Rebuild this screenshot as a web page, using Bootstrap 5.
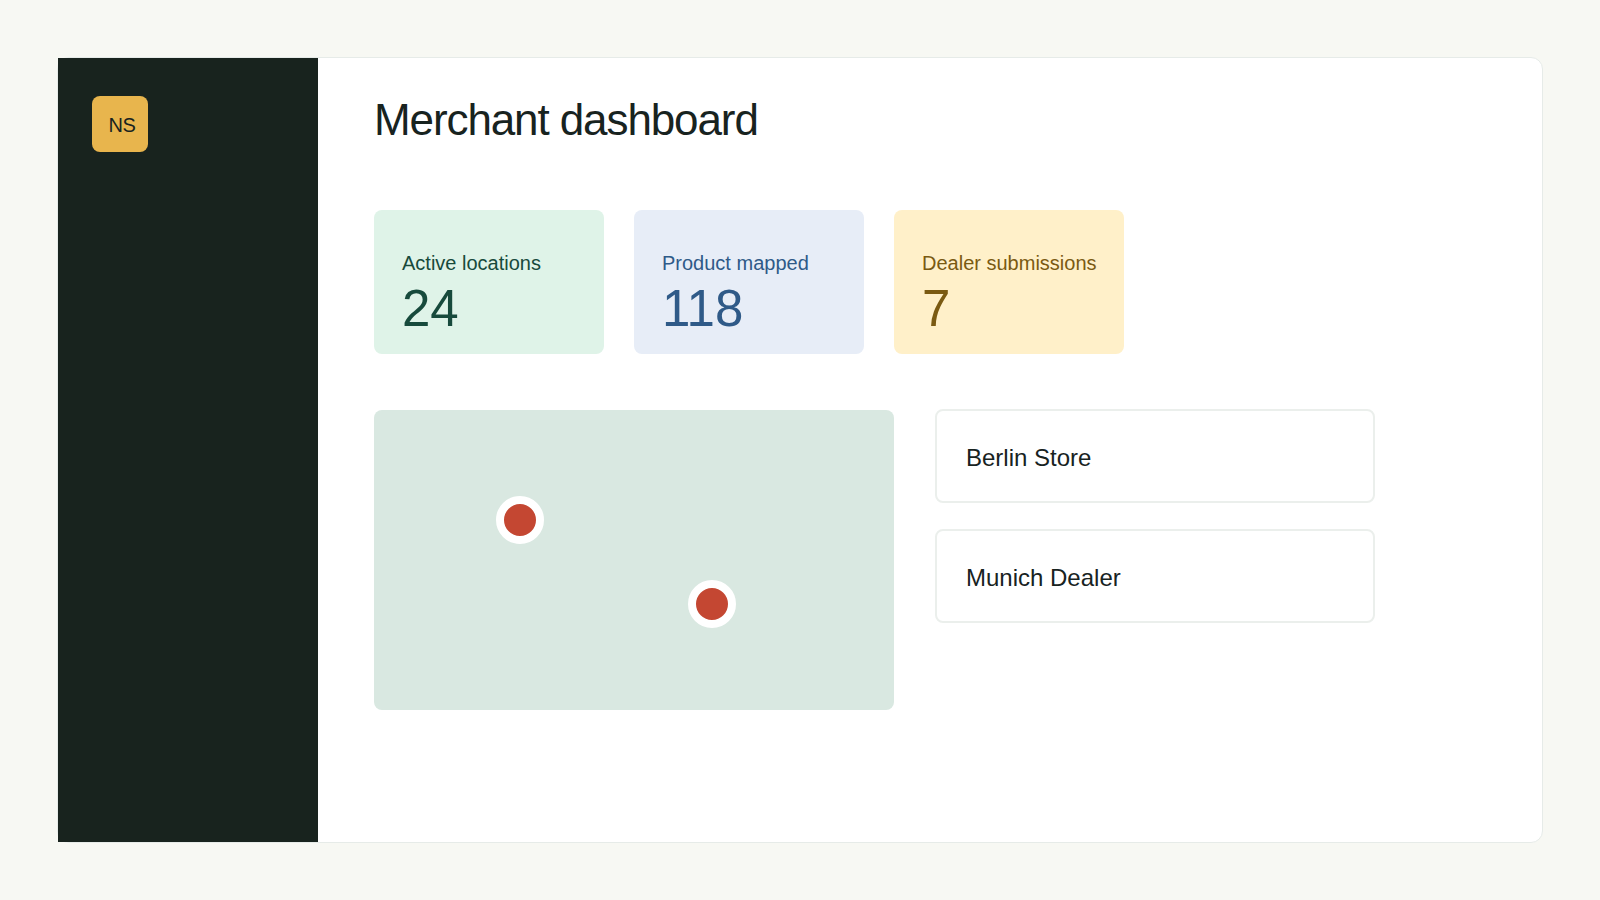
<!DOCTYPE html>
<html>
  <head>
    <title>Merchant dashboard</title>
    <link
      href="https://cdn.jsdelivr.net/npm/bootstrap@5.3.3/dist/css/bootstrap.min.css"
      rel="stylesheet"
    />
    <style>
      body {
        background: #f7f8f3;
        color: #18231f;
        font-family: "Liberation Sans", Arial, sans-serif;
        padding: 57px 57px 0;
      }
      .shell {
        width: 1486px;
        height: 786px;
        background: #fff;
        border: 1px solid #e6ebe8;
        border-radius: 12px;
      }
      .side-bar {
        width: 260px;
        background: #18231e;
        padding: 38px 34px;
      }
      .logo-box {
        width: 56px;
        height: 56px;
        background: #e8b54d;
        border-radius: 8px;
        font-size: 20px;
        letter-spacing: -0.5px;
        padding-left: 4px;
        padding-top: 2px;
      }
      .main-area {
        padding: 32px 56px;
      }
      .page-title {
        font-size: 44px;
        line-height: 60px;
        font-weight: 400;
        letter-spacing: -1.1px;
        margin-bottom: 60px;
      }
      .stat-box {
        width: 230px;
        height: 144px;
        padding: 39px 28px 0;
        border-radius: 8px;
      }
      .stat-label {
        font-size: 20px;
        line-height: 28px;
        white-space: nowrap;
      }
      .stat-num {
        font-size: 51px;
        line-height: 64px;
      }
      .stat-green { background: #dff3e8; color: #174a3c; }
      .stat-blue { background: #e7edf7; color: #2f5a88; }
      .stat-yellow { background: #fff0c9; color: #7a5a12; }
      .stat-row { gap: 30px; margin-bottom: 56px; }
      .map-box {
        position: relative;
        width: 520px;
        height: 300px;
        background: #d9e8e1;
        border-radius: 8px;
      }
      .map-pin {
        position: absolute;
        width: 48px;
        height: 48px;
        background: #c44732;
        border: 8px solid #fff;
        border-radius: 50%;
      }
      .pin-a { left: 122px; top: 86px; }
      .pin-b { left: 314px; top: 170px; }
      .shop-list {
        width: 440px;
        margin-left: 41px;
        gap: 26px;
        margin-top: -1px;
      }
      .shop-item {
        height: 94px;
        padding: 30px 29px;
        border: 2px solid #ebefec;
        border-radius: 8px;
        font-size: 24px;
        line-height: 33px;
      }
    </style>
  </head>
  <body>
    <div class="shell d-flex">
      <aside class="side-bar flex-shrink-0">
        <div class="logo-box d-flex align-items-center justify-content-center">NS</div>
      </aside>
      <main class="main-area flex-grow-1">
        <h1 class="page-title">Merchant dashboard</h1>
        <div class="stat-row d-flex">
          <div class="stat-box stat-green">
            <div class="stat-label">Active locations</div>
            <div class="stat-num">24</div>
          </div>
          <div class="stat-box stat-blue">
            <div class="stat-label">Product mapped</div>
            <div class="stat-num">118</div>
          </div>
          <div class="stat-box stat-yellow">
            <div class="stat-label">Dealer submissions</div>
            <div class="stat-num">7</div>
          </div>
        </div>
        <div class="d-flex align-items-start">
          <div class="map-box">
            <div class="map-pin pin-a"></div>
            <div class="map-pin pin-b"></div>
          </div>
          <div class="shop-list d-flex flex-column">
            <div class="shop-item">Berlin Store</div>
            <div class="shop-item">Munich Dealer</div>
          </div>
        </div>
      </main>
    </div>
  </body>
</html>
